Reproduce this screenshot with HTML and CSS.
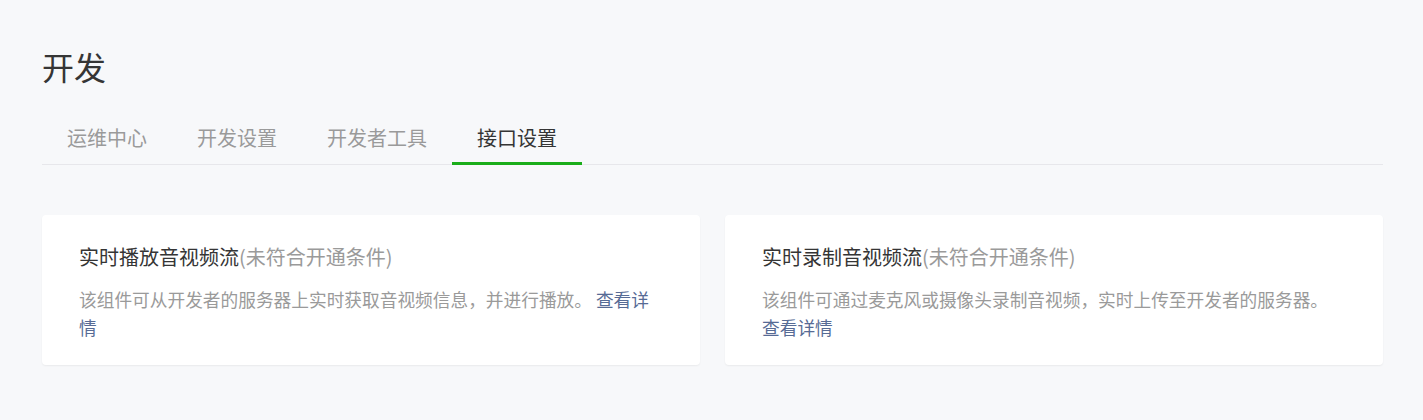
FILE: index.html
```html
<!DOCTYPE html>
<html lang="zh-CN">
<head>
<meta charset="utf-8">
<title>开发</title>
<link rel="stylesheet" href="styles.css">
</head>
<body>
<div class="page">
  <h1 class="page-title">开发</h1>
  <nav class="tabs">
    <a class="tab">运维中心</a>
    <a class="tab">开发设置</a>
    <a class="tab">开发者工具</a>
    <a class="tab active">接口设置</a>
  </nav>
  <div class="cards">
    <div class="card">
      <div class="card-title">实时播放音视频流<span class="muted">(未符合开通条件)</span></div>
      <p class="card-desc">该组件可从开发者的服务器上实时获取音视频信息，并进行播放。 <a class="link">查看详情</a></p>
    </div>
    <div class="card">
      <div class="card-title">实时录制音视频流<span class="muted">(未符合开通条件)</span></div>
      <p class="card-desc">该组件可通过麦克风或摄像头录制音视频，实时上传至开发者的服务器。 <a class="link">查看详情</a></p>
    </div>
  </div>
</div>
</body>
</html>
```
FILE: styles.css
```css
html, body {
  margin: 0;
  padding: 0;
  background: #f7f8fa;
}
body {
  font-family: "Noto Sans CJK SC", "Noto Sans", sans-serif;
  color: #353535;
  text-spacing-trim: space-all;
}
.page {
  padding: 46px 40px 40px 42px;
}
.page-title {
  margin: 0;
  font-size: 32px;
  line-height: 40px;
  font-weight: 400;
  color: #353535;
}
.tabs {
  margin-top: 27px;
  display: flex;
  border-bottom: 1px solid #e7e7eb;
}
.tab {
  display: block;
  height: 52px;
  line-height: 50px;
  padding: 0 25px;
  font-size: 20px;
  color: #9a9a9a;
  border-bottom: 3px solid transparent;
  margin-bottom: -1px;
  box-sizing: border-box;
  cursor: pointer;
}
.tab.active {
  color: #353535;
  border-bottom-color: #1aad19;
}
.cards {
  margin-top: 50px;
  display: grid;
  grid-template-columns: 1fr 1fr;
  gap: 25px;
}
.card {
  background: #fff;
  border-radius: 4px;
  box-shadow: 0 1px 2px rgba(0, 0, 0, 0.06);
  padding: 28px 37px 24px;
}
.card-title {
  font-size: 20px;
  line-height: 28px;
  color: #353535;
}
.muted {
  color: #9a9a9a;
}
.card-desc {
  margin: 14px 0 0;
  font-size: 17.7px;
  line-height: 28px;
  color: #9a9a9a;
}
.link {
  color: #576b95;
  cursor: pointer;
}
```
